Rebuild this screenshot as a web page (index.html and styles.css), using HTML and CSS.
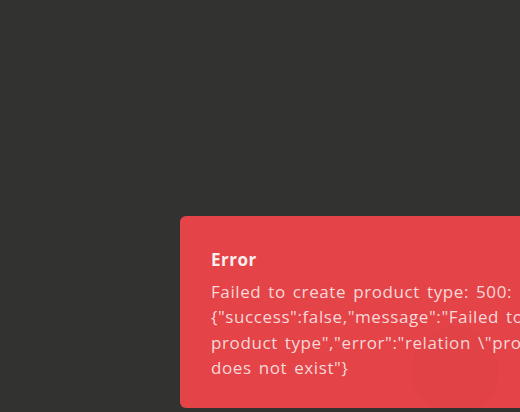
FILE: index.html
```html
<!DOCTYPE html>
<html>
<head>
<meta charset="utf-8">
<link rel="stylesheet" href="styles.css">
</head>
<body>
<div class="stage">
  <div class="toast">
    <div class="title">Error</div>
    <div class="desc">Failed to create product type: 500: {"success":false,"message":"Failed to create product type","error":"relation \"product_types\" does not exist"}</div>
    <span class="ripple"></span>
  </div>
</div>
</body>
</html>
```
FILE: styles.css
```css
html, body {
  margin: 0;
  padding: 0;
  width: 520px;
  height: 412px;
  overflow: hidden;
  background: #323230;
}
.stage {
  display: flex;
  padding: 216px 0 0 180px;
}
.toast {
  position: relative;
  flex: 0 0 auto;
  width: 490px;
  box-sizing: border-box;
  padding: 31px 32px 27px 31px;
  background: #e44347;
  border-radius: 6px;
  font-family: "Open Sans", sans-serif;
  color: #f8d8d9;
}
.title {
  font-weight: 700;
  font-size: 17px;
  letter-spacing: 0.5px;
  line-height: 26px;
  color: #fbeeee;
  margin-bottom: 6px;
}
.desc {
  font-size: 17px;
  letter-spacing: 0.6px;
  word-spacing: 2px;
  line-height: 25.4px;
}
.ripple {
  position: absolute;
  left: 231px;
  top: 110px;
  width: 88px;
  height: 88px;
  border-radius: 50%;
  background: rgba(0, 0, 0, 0.012);
}
```
